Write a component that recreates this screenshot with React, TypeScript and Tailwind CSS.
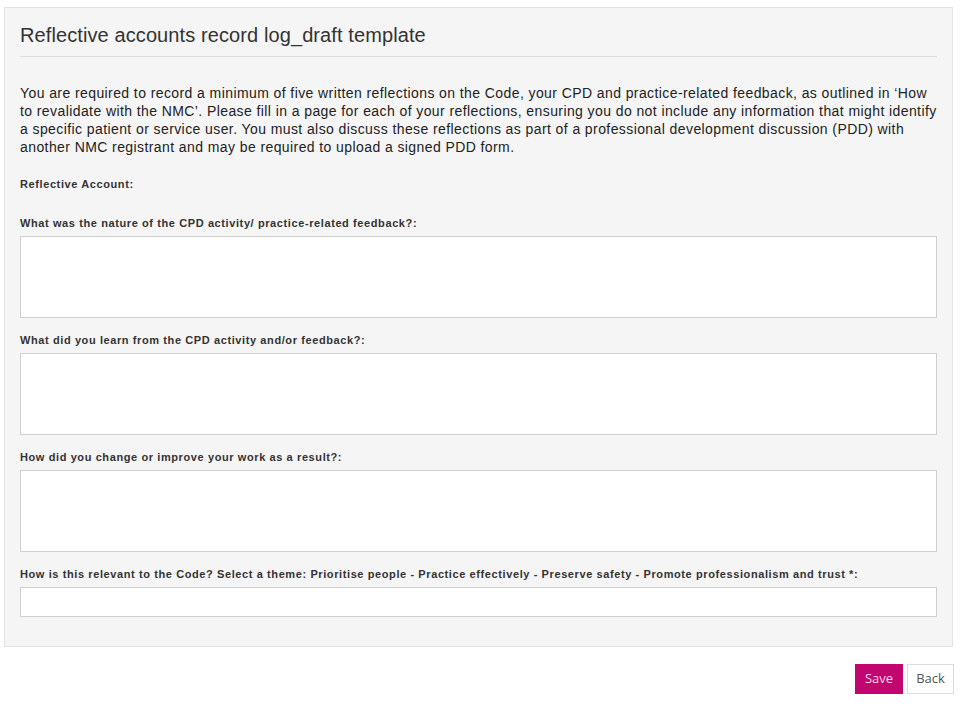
const fields = [
  { label: "What was the nature of the CPD activity/ practice-related feedback?:", tall: true },
  { label: "What did you learn from the CPD activity and/or feedback?:", tall: true },
  { label: "How did you change or improve your work as a result?:", tall: true },
  {
    label:
      "How is this relevant to the Code? Select a theme: Prioritise people - Practice effectively - Preserve safety - Promote professionalism and trust *:",
    tall: false,
  },
];

export default function App() {
  return (
    <div className="min-h-[720px] bg-white pt-[7px] font-['Liberation_Sans',Arial,sans-serif] text-[#333]">
      <div className="ml-[4px] w-[949px] border border-[#e3e3e3] bg-[#f5f5f5] px-[15px] pb-[29px] pt-[15px]">
        <h1 className="border-b border-[#dcdcdc] pb-[9px] text-[20px] leading-[24px] tracking-[0.1px] text-[#333]">
          Reflective accounts record log_draft template
        </h1>
        <p className="mt-[27px] whitespace-nowrap text-[14px] leading-[18px] tracking-[0.41px] text-[#222]">
          You are required to record a minimum of five written reflections on the Code, your CPD and
          practice-related feedback, as outlined in ‘How
          <br />
          to revalidate with the NMC’. Please fill in a page for each of your reflections, ensuring you
          do not include any information that might identify
          <br />
          a specific patient or service user. You must also discuss these reflections as part of a
          professional development discussion (PDD) with
          <br />
          another NMC registrant and may be required to upload a signed PDD form.
        </p>
        <p className="mt-[20px] text-[11px] font-bold leading-[16px] tracking-[0.6px] text-[#333]">
          Reflective Account:
        </p>
        <div className="mt-[23px] flex flex-col gap-[14px]">
          {fields.map((f) => (
            <div key={f.label} className="flex flex-col">
              <label className="text-[11px] font-bold leading-[16px] tracking-[0.6px] text-[#333]">
                {f.label}
              </label>
              {f.tall ? (
                <textarea className="mt-[5px] h-[82px] w-full resize-none border border-[#cfcfcf] bg-white outline-none" />
              ) : (
                <input className="mt-[5px] h-[30px] w-full border border-[#cfcfcf] bg-white outline-none" />
              )}
            </div>
          ))}
        </div>
      </div>
      <div className="mr-[6px] mt-[17px] flex justify-end gap-[4px] font-['Open_Sans',sans-serif] text-[13px]">
        <button className="h-[30px] w-[48px] bg-[#c1076f] text-[#fbd6ea]">Save</button>
        <button className="h-[30px] w-[47px] border border-[#dcdcdc] bg-white text-[#555]">Back</button>
      </div>
    </div>
  );
}
